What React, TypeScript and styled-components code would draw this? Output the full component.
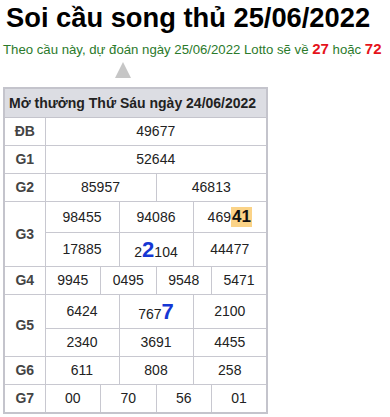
import React from 'react';
import styled, { createGlobalStyle } from 'styled-components';

const GlobalStyle = createGlobalStyle`
  body {
    margin: 0;
    padding: 0 3px;
    background: #fff;
    font-family: Arial, "Liberation Sans", sans-serif;
    color: #222;
  }
`;

const Title = styled.h1`
  margin: 0;
  padding: 2px 0 0 3px;
  font-size: 27.3px;
  line-height: 32px;
  font-weight: bold;
  color: #000;
`;

const Prediction = styled.div`
  margin-top: 6px;
  font-size: 13.2px;
  line-height: 20px;
  color: #2b7a2b;
  white-space: nowrap;
`;

const Lotto = styled.b`
  font-size: 15px;
  line-height: 18px;
  color: #e5131b;
`;

const Arrow = styled.div`
  width: 0;
  height: 0;
  margin: 2px 0 9px 112px;
  border-left: 8px solid transparent;
  border-right: 8px solid transparent;
  border-bottom: 16px solid #c6c6c6;
`;

const Table = styled.table`
  width: 265px;
  border-collapse: collapse;
  table-layout: fixed;
  border: 2px solid #c4c4cc;
  font-size: 14px;
`;

const Head = styled.th`
  height: 28px;
  padding: 0 4px;
  background: #dcdde3;
  border: 1px solid #c4c4cc;
  font-weight: bold;
  text-align: left;
  color: #222;
  white-space: nowrap;
`;

const Label = styled.td`
  padding: 5px 0;
  border: 1px solid #c8c8d0;
  text-align: center;
  font-weight: bold;
  color: #444;
  line-height: 17px;
`;

const Cell = styled.td`
  padding: 5px 0;
  border: 1px solid #c8c8d0;
  text-align: center;
  line-height: 17px;
  white-space: nowrap;
`;

const Hit = styled.span`
  display: inline-block;
  padding: 0 1px;
  background: #fbd387;
  font-size: 17px;
  font-weight: bold;
  line-height: 20px;
  color: #111;
`;

const Big = styled.span`
  font-size: 22px;
  font-weight: bold;
  line-height: 23px;
  color: #1537d4;
`;

type Row = { label: string; lines: React.ReactNode[][] };

const rows: Row[] = [
  { label: 'ĐB', lines: [['49677']] },
  { label: 'G1', lines: [['52644']] },
  { label: 'G2', lines: [['85957', '46813']] },
  {
    label: 'G3',
    lines: [
      ['98455', '94086', <>469<Hit>41</Hit></>],
      ['17885', <>2<Big>2</Big>104</>, '44477'],
    ],
  },
  { label: 'G4', lines: [['9945', '0495', '9548', '5471']] },
  {
    label: 'G5',
    lines: [
      ['6424', <>767<Big>7</Big></>, '2100'],
      ['2340', '3691', '4455'],
    ],
  },
  { label: 'G6', lines: [['611', '808', '258']] },
  { label: 'G7', lines: [['00', '70', '56', '01']] },
];

export default function App() {
  return (
    <>
      <GlobalStyle />
      <Title>Soi cầu song thủ 25/06/2022</Title>
      <Prediction>
        Theo cầu này, dự đoán ngày 25/06/2022 Lotto sẽ về <Lotto>27</Lotto> hoặc{' '}
        <Lotto>72</Lotto>
      </Prediction>
      <Arrow />
      <Table>
        <colgroup>
          <col style={{ width: 41 }} />
          {Array.from({ length: 12 }).map((_, i) => (
            <col key={i} />
          ))}
        </colgroup>
        <thead>
          <tr>
            <Head colSpan={13}>Mở thưởng Thứ Sáu ngày 24/06/2022</Head>
          </tr>
        </thead>
        <tbody>
          {rows.map((row) =>
            row.lines.map((line, li) => (
              <tr key={row.label + li}>
                {li === 0 && <Label rowSpan={row.lines.length}>{row.label}</Label>}
                {line.map((value, ci) => (
                  <Cell key={ci} colSpan={12 / line.length}>
                    {value}
                  </Cell>
                ))}
              </tr>
            ))
          )}
        </tbody>
      </Table>
    </>
  );
}
